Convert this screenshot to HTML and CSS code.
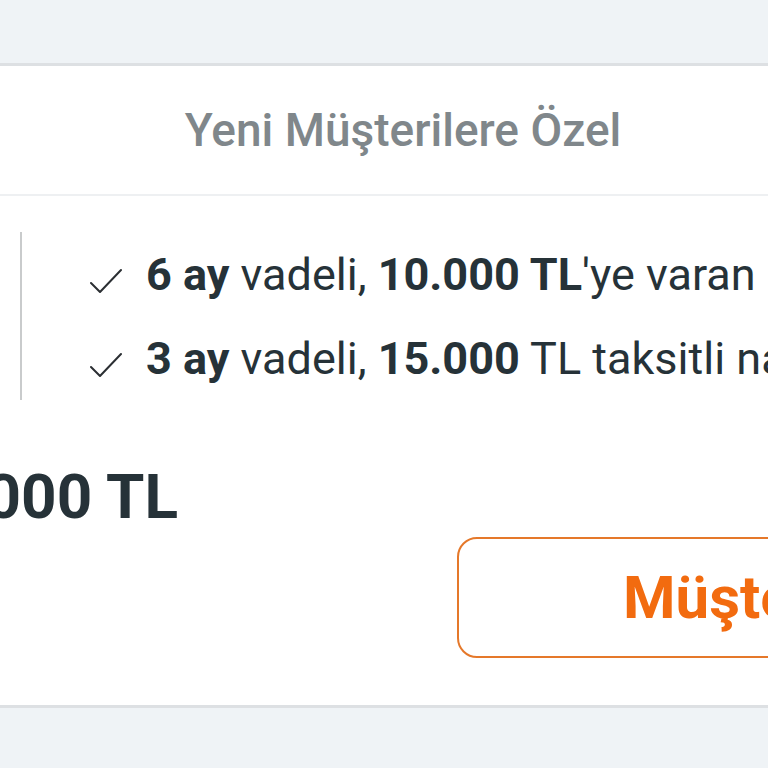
FILE: index.html
```html
<!DOCTYPE html>
<html lang="tr">
<head>
  <meta charset="UTF-8" />
  <meta name="viewport" content="width=device-width, initial-scale=1.0"/>
  <title>Yeni Müşterilere Özel</title>
  <link rel="stylesheet" href="styles.css">
</head>
<body>

  <div class="top-space"></div>

  <section class="offer-card">
    <div class="offer-title">Yeni Müşterilere Özel</div>

    <div class="offer-body">
      <ul class="perks">
        <li>
          <svg class="check" viewBox="0 0 32 26" width="32" height="26">
            <path d="M1 15 L10 24 L31 2" fill="none" stroke="#2b2f33" stroke-width="2" stroke-linecap="round" stroke-linejoin="round"/>
          </svg>
          <span><b>6 ay</b> vadeli, <b>10.000 TL</b>'ye varan nakit avans</span>
        </li>
        <li>
          <svg class="check" viewBox="0 0 32 26" width="32" height="26">
            <path d="M1 15 L10 24 L31 2" fill="none" stroke="#2b2f33" stroke-width="2" stroke-linecap="round" stroke-linejoin="round"/>
          </svg>
          <span><b>3 ay</b> vadeli, <b>15.000</b> TL taksitli nakit avans</span>
        </li>
      </ul>

      <div class="amount-row">
        <div class="amount">15.000 TL</div>
      </div>

      <div class="actions">
        <button class="cta">Müşteri Ol</button>
      </div>
    </div>
  </section>

</body>
</html>
```

FILE: styles.css
```css
* { margin: 0; padding: 0; box-sizing: border-box; }
body {
  font-family: Roboto, 'Noto Sans', sans-serif;
  background: #eff3f6;
  color: #263238;
  width: 768px;
  height: 768px;
  overflow: hidden;
}
.top-space { height: 63px; }
.offer-card {
  background: #fff;
  border-top: 3px solid #dde0e3;
  border-bottom: 3px solid #dde0e3;
  overflow: hidden;
}
.offer-title {
  height: 130px;
  display: flex;
  align-items: center;
  justify-content: center;
  padding-left: 38px;
  font-size: 46px;
  font-weight: 500;
  color: #80878b;
  border-bottom: 2px solid #eef0f2;
  white-space: nowrap;
}
.offer-body {
  padding: 36px 0 47px;
}
.perks {
  list-style: none;
  margin-left: 20px;
  border-left: 2px solid #c9cbcc;
  padding-left: 68px;
  width: 1000px;
}
.perks li {
  display: flex;
  align-items: center;
  gap: 24px;
  height: 84px;
  font-size: 45px;
  white-space: nowrap;
}
.perks li b { font-weight: 700; }
.check {
  flex-shrink: 0;
  margin-top: 14px;
}
.amount-row {
  width: 178px;
  display: flex;
  justify-content: flex-end;
  margin-top: 59px;
}
.amount {
  font-size: 62px;
  font-weight: 700;
  line-height: 76px;
  white-space: nowrap;
}
.actions {
  padding-left: 457px;
  margin-top: 2px;
}
.cta {
  display: block;
  width: 640px;
  height: 121px;
  border: 2px solid #e5782a;
  border-radius: 20px;
  background: #fff;
  color: #f26b0f;
  font-family: Roboto, 'Noto Sans', sans-serif;
  font-size: 60px;
  font-weight: 700;
  text-align: left;
  padding-left: 164px;
  white-space: nowrap;
}
```
